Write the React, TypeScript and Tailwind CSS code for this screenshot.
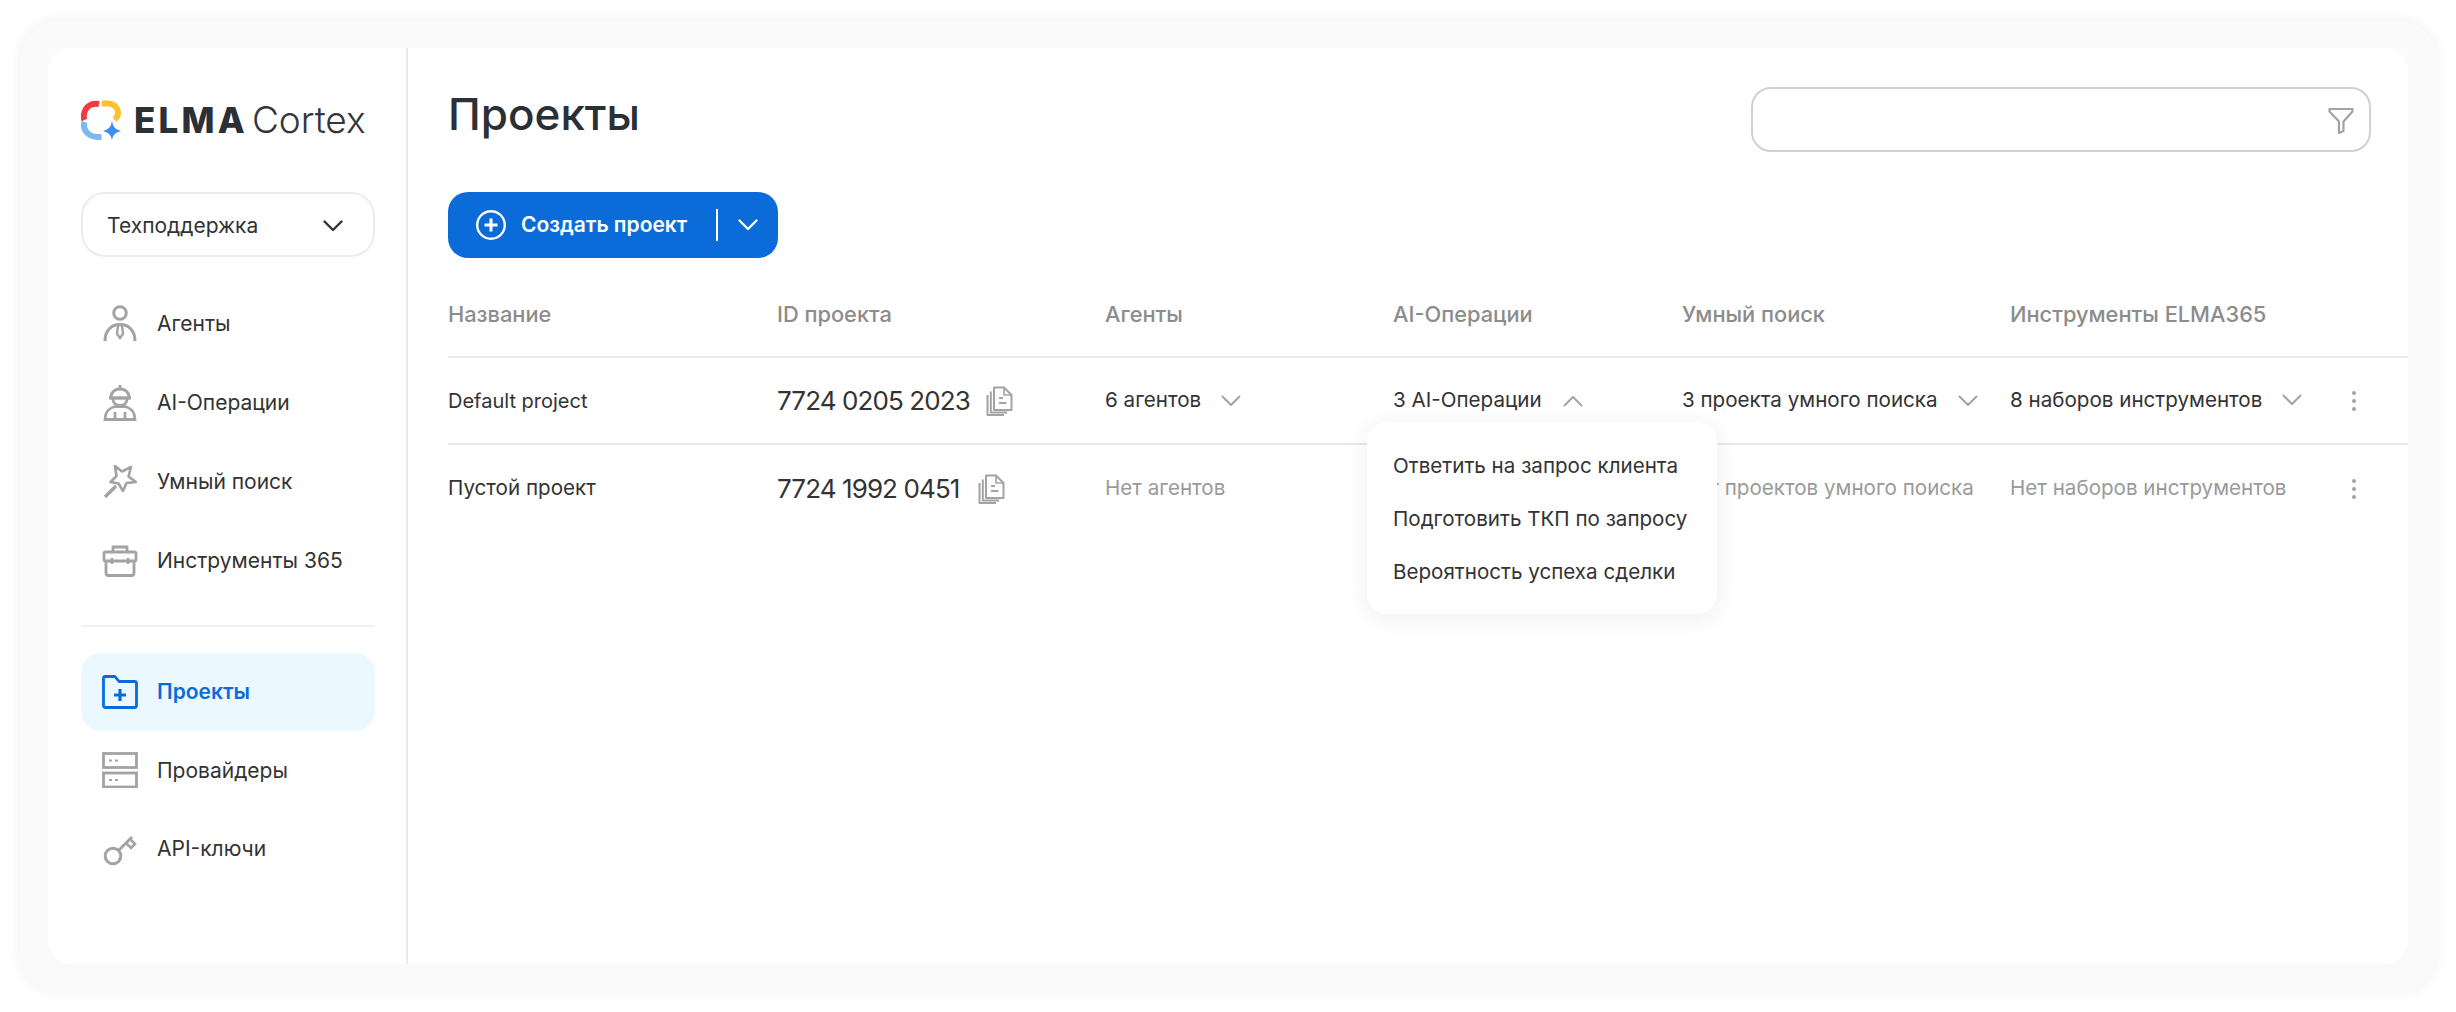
import React from "react";

const ic = "#a3a3a3";

function Logo() {
  return (
    <svg width="40" height="40" viewBox="0 0 40 40" fill="none">
      <path d="M3.5 20C2 17 3 10 6.5 7C9 4.5 13 3 18 4" stroke="#ee3b3b" strokeWidth="6" />
      <path d="M21 3.5H27C33 3.5 37 8 37 13C37 15.5 36 17.5 33.5 19.5" stroke="#fdc32d" strokeWidth="6" />
      <path d="M3.5 22C2.5 25 3 29 5.5 32C8.5 36 13 37.5 20.5 37" stroke="#7db8f2" strokeWidth="6" />
      <path d="M31 20.5C31.8 26.5 34 29.5 40 31C34 32.5 31.8 35.5 31 40C30.2 35.5 28 32.5 22 31C28 29.5 30.2 26.5 31 20.5Z" fill="#3a8ef0" />
    </svg>
  );
}

function Chevron({ up = false, color = "#333333", size = 20, w = 2.4 }: { up?: boolean; color?: string; size?: number; w?: number }) {
  return (
    <svg width={size} height={size * 0.6} viewBox="0 0 20 12" fill="none">
      <path d={up ? "M1.5 10.5L10 2L18.5 10.5" : "M1.5 1.5L10 10L18.5 1.5"} stroke={color} strokeWidth={w} strokeLinecap="round" strokeLinejoin="round" />
    </svg>
  );
}

function AgentIcon() {
  return (
    <svg width="34" height="38" viewBox="0 0 34 38" fill="none" stroke={ic} strokeWidth="3">
      <circle cx="17" cy="8" r="6.3" />
      <path d="M2 36C2 26 8 19.5 17 19.5C26 19.5 32 26 32 36" />
      <path d="M15 20H19L20 29L17 33L14 29Z" strokeWidth="2.4" />
    </svg>
  );
}

function OpsIcon() {
  return (
    <svg width="34" height="36" viewBox="0 0 34 36" fill="none" stroke={ic} strokeWidth="2.8">
      <path d="M17 0V4" />
      <path d="M8 12C8 7 12 4 17 4C22 4 26 7 26 12" />
      <path d="M6 13H28" strokeWidth="3.4" />
      <path d="M10 14C10 18 13 20.5 17 20.5C21 20.5 24 18 24 14" />
      <path d="M2 34.5C2 27 6 23 12 21.5H22C28 23 32 27 32 34.5Z" />
      <path d="M12 27V34M22 27V34" />
    </svg>
  );
}

function WandIcon() {
  return (
    <svg width="34" height="34" viewBox="0 0 34 34" fill="none" stroke={ic} strokeWidth="2.6" strokeLinejoin="round">
      <path d="M12 1L19 6.5L28 2L25.5 11.5L33 17L23.5 18L20 26L15.5 18.5L7.5 17L13.5 11Z" />
      <path d="M13 21L2 32" strokeWidth="3.4" />
    </svg>
  );
}

function CaseIcon() {
  return (
    <svg width="36" height="32" viewBox="0 0 36 32" fill="none" stroke={ic} strokeWidth="2.8">
      <path d="M11 7V2H25V7" />
      <rect x="2" y="7" width="32" height="9" rx="1.5" />
      <path d="M4 16V28C4 29.5 5 30.5 6.5 30.5H29.5C31 30.5 32 29.5 32 28V16" />
      <path d="M10 13V19M26 13V19" />
    </svg>
  );
}

function FolderIcon() {
  return (
    <svg width="36" height="34" viewBox="0 0 36 34" fill="none" stroke="#0b6cd9" strokeWidth="2.8" strokeLinejoin="round">
      <path d="M1.5 3C1.5 2 2.5 1.5 3.5 1.5H13L17 6.5H32.5C33.8 6.5 34.5 7.2 34.5 8.5V30.5C34.5 31.8 33.8 32.5 32.5 32.5H3.5C2.3 32.5 1.5 31.8 1.5 30.5Z" />
      <path d="M18 14V26M12 20H24" strokeWidth="3.2" />
    </svg>
  );
}

function ServerIcon() {
  return (
    <svg width="36" height="36" viewBox="0 0 36 36" fill="none" stroke={ic} strokeWidth="2.8">
      <rect x="1.5" y="1.5" width="33" height="14" />
      <rect x="1.5" y="21" width="33" height="14" />
      <path d="M7 8.5H10M13 8.5H16M7 28H10M13 28H16" strokeWidth="2.2" />
    </svg>
  );
}

function KeyIcon() {
  return (
    <svg width="34" height="34" viewBox="0 0 34 34" fill="none" stroke={ic} strokeWidth="3">
      <circle cx="10" cy="24" r="7.8" />
      <path d="M16 18L29 5" />
      <path d="M23 11L28 16L32 12L27 7" strokeWidth="2.6" />
    </svg>
  );
}

function CopyIcon() {
  return (
    <svg width="27" height="30" viewBox="0 0 27 30" fill="none" stroke={ic} strokeWidth="2" strokeLinejoin="round">
      <path d="M8 1.5H18L25.5 9V24H8Z" />
      <path d="M18 1.5V9H25.5" strokeWidth="1.6" />
      <path d="M13 12H17M13 17H20.5" strokeWidth="2" />
      <path d="M4.8 5.5V26.5H21" />
      <path d="M1.5 9V29H18" />
    </svg>
  );
}

function Kebab() {
  return (
    <div className="flex flex-col items-center gap-[4px]">
      <span className="h-[4px] w-[4px] rounded-full bg-[#a3a3a3]" />
      <span className="h-[4px] w-[4px] rounded-full bg-[#a3a3a3]" />
      <span className="h-[4px] w-[4px] rounded-full bg-[#a3a3a3]" />
    </div>
  );
}

function NavItem({ icon, label, active = false, h = "h-[78.5px]" }: { icon: React.ReactNode; label: string; active?: boolean; h?: string }) {
  return (
    <div className={active ? "flex h-[78px] items-center rounded-[20px] bg-[#ebf8ff] pl-[21px]" : `flex ${h} items-center pl-[21px]`}>
      <div className="flex w-[36px] justify-center">{icon}</div>
      <span className={active ? "ml-[19px] text-[21px] font-semibold text-[#0b6cd9]" : "ml-[19px] text-[21px] text-[#333333]"}>{label}</span>
    </div>
  );
}

const Cell = ({ children, grey = false }: { children: React.ReactNode; grey?: boolean }) => (
  <div className={grey ? "flex items-center text-[20.6px] text-[#9a9a9a]" : "flex items-center text-[20.6px] text-[#333333]"}>{children}</div>
);

const chev = <span className="ml-[20px]"><Chevron color="#a3a3a3" size={20} w={2} /></span>;

export default function App() {
  return (
    <div className="h-[1012px] w-[2456px] bg-white pb-[20px] pl-[20px] pr-[19px] pt-[20px]" style={{ fontFamily: "Inter, 'Noto Sans', sans-serif" }}>
      <div className="h-[972px] rounded-[40px] bg-[#fafafa] pb-[28px] pl-[28px] pr-[29px] pt-[28px] shadow-[0_0_8px_4px_#f7f7f7]">
        <div className="flex h-[916px] overflow-hidden rounded-[24px] bg-white">
          {/* Sidebar */}
          <aside className="w-[360px] shrink-0 border-r-2 border-[#e8e8e8] pl-[33px] pr-[31px]">
            <div className="mt-[52px] flex h-[40px] items-center">
              <Logo />
              <span className="ml-[13px] text-[35px] font-extrabold tracking-[3.2px] text-[#2b2f36]">ELMA</span>
              <span className="ml-[4px] text-[37px] font-light text-[#33363c]">Cortex</span>
            </div>
            <div className="mt-[52px] flex h-[65px] items-center justify-between rounded-[24px] border-2 border-[#ececec] pl-[24px] pr-[30px] pt-[2px] text-[21px] text-[#333333]">
              <span>Техподдержка</span>
              <Chevron />
            </div>
            <div className="mt-[28px]">
              <NavItem h="h-[78px]" icon={<AgentIcon />} label="Агенты" />
              <NavItem h="h-[79px]" icon={<OpsIcon />} label="AI-Операции" />
              <NavItem h="h-[79px]" icon={<WandIcon />} label="Умный поиск" />
              <NavItem h="h-[79px]" icon={<CaseIcon />} label="Инструменты 365" />
            </div>
            <div className="mt-[25px] h-[2px] bg-[#f0f0f0]" />
            <div className="mt-[26px]">
              <NavItem active icon={<FolderIcon />} label="Проекты" />
              <NavItem icon={<ServerIcon />} label="Провайдеры" />
              <NavItem icon={<KeyIcon />} label="API-ключи" />
            </div>
          </aside>

          {/* Main */}
          <main className="min-w-0 flex-1 pl-[40px]">
            <div className="flex items-start justify-between pr-[37px] pt-[39px]">
              <h1 className="text-[44px] font-medium leading-[54px] text-[#2b2f36]">Проекты</h1>
              <div className="flex h-[65px] w-[620px] items-center justify-end rounded-[20px] border-2 border-[#d0d0d0] pr-[15px] pt-[2px]">
                <svg width="26" height="27" viewBox="0 0 26 27" fill="none" stroke={ic} strokeWidth="2.2" strokeLinejoin="round">
                  <path d="M1.5 2H24.5V4.5L15.5 14.5V24L11 26V14.5L1.5 4.5Z" />
                </svg>
              </div>
            </div>

            <div className="mt-[40px] flex h-[66px] w-[330px] items-center rounded-[20px] bg-[#0b6cd9] pl-[28px] text-white">
              <svg width="30" height="30" viewBox="0 0 30 30" fill="none" stroke="white">
                <circle cx="15" cy="15" r="13.8" strokeWidth="2.4" />
                <path d="M15 8.5V21.5M8.5 15H21.5" strokeWidth="3" />
              </svg>
              <span className="ml-[15px] text-[21px] font-semibold">Создать проект</span>
              <div className="ml-[29px] h-[32px] w-[2px] bg-white" />
              <span className="ml-[20px]"><Chevron color="#ffffff" /></span>
            </div>

            <div className="mt-[34px] grid grid-cols-[329px_328px_288px_289px_328px_1fr]">
              <div className="col-span-6 grid h-[66px] grid-cols-subgrid items-center border-b-2 border-[#e8e8e8] pb-[20px] text-[21.8px] font-medium text-[#8c8c8c]">
                <span>Название</span>
                <span>ID проекта</span>
                <span>Агенты</span>
                <span>AI-Операции</span>
                <span>Умный поиск</span>
                <span>Инструменты ELMA365</span>
              </div>

              <div className="col-span-6 grid h-[87px] grid-cols-subgrid border-b-2 border-[#e8e8e8]">
                <div className="flex items-center text-[20px] text-[#333333]">Default project</div>
                <div className="flex items-center text-[26px] tracking-[-0.9px] text-[#333333]">7724 0205 2023<span className="ml-[16px]"><CopyIcon /></span></div>
                <Cell>6 агентов{chev}</Cell>
                <div className="relative flex items-center text-[20.6px] text-[#333333]">
                  3 AI-Операции
                  <span className="ml-[21px]"><Chevron up color="#a3a3a3" w={2} /></span>
                  <div className="absolute left-[-26px] top-[64px] z-10 flex h-[192px] w-[350px] flex-col items-start rounded-[20px] bg-white pl-[26px] pt-[18px] shadow-[0_4px_24px_rgba(0,0,0,0.07)]">
                    <div className="flex h-[53px] items-center">Ответить на запрос клиента</div>
                    <div className="flex h-[53px] items-center">Подготовить ТКП по запросу</div>
                    <div className="flex h-[52px] items-center">Вероятность успеха сделки</div>
                  </div>
                </div>
                <Cell>3 проекта умного поиска{chev}</Cell>
                <div className="flex items-center justify-between pr-[52px] text-[20.6px] text-[#333333]">
                  <span className="flex items-center">8 наборов инструментов{chev}</span>
                  <Kebab />
                </div>
              </div>

              <div className="col-span-6 grid h-[87px] grid-cols-subgrid">
                <Cell>Пустой проект</Cell>
                <div className="flex items-center text-[26px] tracking-[-0.9px] text-[#333333]">7724 1992 0451<span className="ml-[19px]"><CopyIcon /></span></div>
                <Cell grey>Нет агентов</Cell>
                <div />
                <Cell grey>Нет проектов умного поиска</Cell>
                <div className="flex items-center justify-between pr-[52px] text-[20.6px] text-[#9a9a9a]">
                  <span>Нет наборов инструментов</span>
                  <Kebab />
                </div>
              </div>
            </div>
          </main>
        </div>
      </div>
    </div>
  );
}
